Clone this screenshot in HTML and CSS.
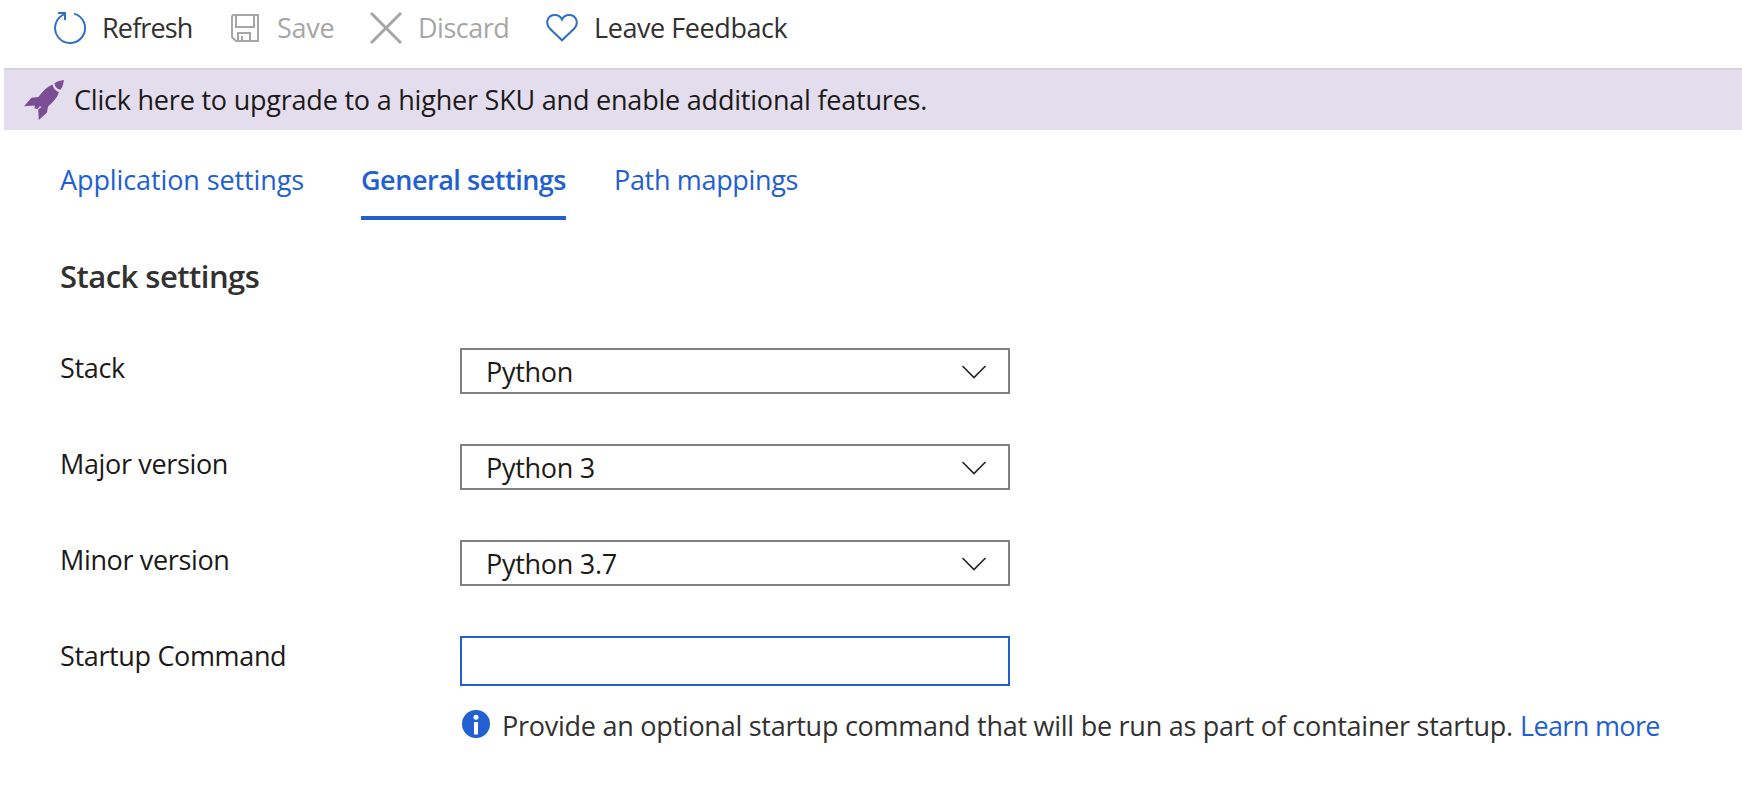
FILE: index.html
```
<!DOCTYPE html>
<html lang="en">
<head>
<meta charset="utf-8">
<title>General settings</title>
<link rel="stylesheet" href="styles.css">
</head>
<body>
<header class="toolbar">
  <button class="command refresh"><svg width="34" height="36" viewBox="0 0 34 36" fill="none" stroke="#2e71c0" stroke-width="2"><path d="M21 4.600A15 15 0 1 1 12.200 4.900M5 4H12V11"/></svg><span>Refresh</span></button>
  <button class="command save" disabled><svg width="28" height="28" viewBox="0 0 28 28" fill="none" stroke="#a6a6a6" stroke-width="2"><path d="M1 3Q1 1 3 1H27V27H5L1 23ZM5 1V13H23V1M7 27V19H19V27M11 22V27"/></svg><span>Save</span></button>
  <button class="command discard" disabled><svg width="32" height="32" viewBox="0 0 32 32" fill="none" stroke="#a6a6a6" stroke-width="3"><path d="M1 1L31 31M31 1L1 31"/></svg><span>Discard</span></button>
  <button class="command feedback"><svg width="32" height="28" viewBox="0 0 32 28" fill="none" stroke="#2e71c0" stroke-width="2"><path d="M16 26.300L3.500 14.300C-1 9 1.500 1 9 1C13 1 15 3.500 16 5.500C17 3.500 19 1 23 1C30.500 1 33 9 28.500 14.300Z"/></svg><span>Leave Feedback</span></button>
</header>
<a class="banner">
  <svg width="40" height="40" viewBox="0 0 40 40" fill="#7a4d94"><path d="M40 0L38.500 6.500L36.500 9.700Q31 8.500 30.500 3.200L34 1.200Z"/><path d="M28.500 4.500Q29.500 10.500 35 12Q33 19 24 26.500L23 32.500L14.800 40L14.200 29.500L17.500 27L16 26L13.500 29L10.500 28.500L10.800 25.500L0 26.200L7.500 17.800L14.500 17Q21 7.500 28.500 4.500Z"/></svg>
  <span>Click here to upgrade to a higher SKU and enable additional features.</span>
</a>
<main class="content">
  <nav class="tabs">
    <a class="tab tab-app"><span>Application settings</span></a>
    <a class="tab tab-general active"><span>General settings</span></a>
    <a class="tab tab-path"><span>Path mappings</span></a>
  </nav>
  <h2 class="heading"><span>Stack settings</span></h2>
  <div class="form">
    <div class="row"><label>Stack</label><div class="select"><span>Python</span><svg width="26" height="14" viewBox="0 0 26 14" fill="none" stroke="#222" stroke-width="1.600"><path d="M1.500 1L13 12.500L24.500 1"/></svg></div></div>
    <div class="row"><label>Major version</label><div class="select"><span>Python 3</span><svg width="26" height="14" viewBox="0 0 26 14" fill="none" stroke="#222" stroke-width="1.600"><path d="M1.500 1L13 12.500L24.500 1"/></svg></div></div>
    <div class="row"><label>Minor version</label><div class="select"><span>Python 3.7</span><svg width="26" height="14" viewBox="0 0 26 14" fill="none" stroke="#222" stroke-width="1.600"><path d="M1.500 1L13 12.500L24.500 1"/></svg></div></div>
    <div class="row"><label for="startup">Startup Command</label><input class="input" id="startup" type="text"></div>
  </div>
  <div class="hint">
    <svg width="28" height="28" viewBox="0 0 28 28"><circle cx="14" cy="14" r="14" fill="#215fd2"/><circle cx="14" cy="7.300" r="2.500" fill="#fff"/><path d="M12 12h4v12.500h-4z" fill="#fff"/></svg>
    <span class="hint-text">Provide an optional startup command that will be run as part of container startup.</span>
    <a class="learn">Learn more</a>
  </div>
</main>
</body>
</html>
```
FILE: styles.css
```
* { box-sizing: border-box; }
body {
  margin: 0;
  background: #fff;
  color: #1b1a19;
  font: 27px/40px "Open Sans", "Noto Sans", sans-serif;
  white-space: nowrap;
  overflow: hidden;
}
svg { display: block; flex: none; }
.toolbar {
  display: flex;
  height: 70px;
  margin-left: 4px;
  padding: 8px 0 0 49px;
  border-bottom: 2px solid #d4d2d6;
}
.command {
  display: flex;
  align-items: flex-start;
  flex: none;
  height: 40px;
  padding: 0;
  border: 0;
  background: none;
  font: inherit;
  color: #323130;
}
.command:disabled { color: #a6a6a6; }
.refresh { width: 178px; gap: 15px; letter-spacing: -0.85px; }
.refresh svg { margin-top: 1px; }
.save { width: 139px; gap: 18px; letter-spacing: -0.3px; }
.save svg { margin-top: 6px; }
.discard { width: 176px; gap: 16px; letter-spacing: -0.5px; }
.discard svg { margin-top: 4px; }
.feedback { gap: 16px; letter-spacing: -0.43px; }
.feedback svg { margin-top: 6px; }
.banner {
  display: flex;
  height: 60px;
  margin-left: 4px;
  padding: 10px 0 0 20px;
  gap: 10px;
  background: #e4dded;
  letter-spacing: -0.21px;
}
.content { padding-left: 60px; }
.tabs { display: flex; height: 90px; padding-top: 30px; color: #215fd2; }
.tab { flex: none; height: 60px; }
.tab-app { width: 301px; letter-spacing: -0.1px; }
.tab-general { width: 205px; margin-right: 48px; letter-spacing: -0.47px; }
.tab-path { letter-spacing: -0.33px; }
.active { font-weight: 600; border-bottom: 4px solid #215fd2; }
.heading {
  margin: 0;
  padding-top: 36px;
  height: 128px;
  font-size: 31px;
  font-weight: 600;
  letter-spacing: -0.52px;
  color: #323130;
}
.form { display: grid; grid-auto-rows: 96px; letter-spacing: -0.35px; }
.row { display: grid; grid-template-columns: 400px 550px; align-items: start; }
.select {
  display: flex;
  justify-content: space-between;
  height: 46px;
  padding: 2px 21px 0 24px;
  border: 2px solid #808080;
  letter-spacing: -0.28px;
}
.select svg { margin-top: 13px; }
.input { height: 50px; border: 2px solid #215fd2; background: #fff; font: inherit; outline: none; }
.hint { display: flex; margin: -26px 0 0 402px; color: #323130; }
.hint svg { margin-top: 4px; }
.hint-text { width: 1018px; margin: 0 0 0 12px; letter-spacing: -0.26px; }
.learn { color: #215fd2; letter-spacing: -0.65px; }
```
